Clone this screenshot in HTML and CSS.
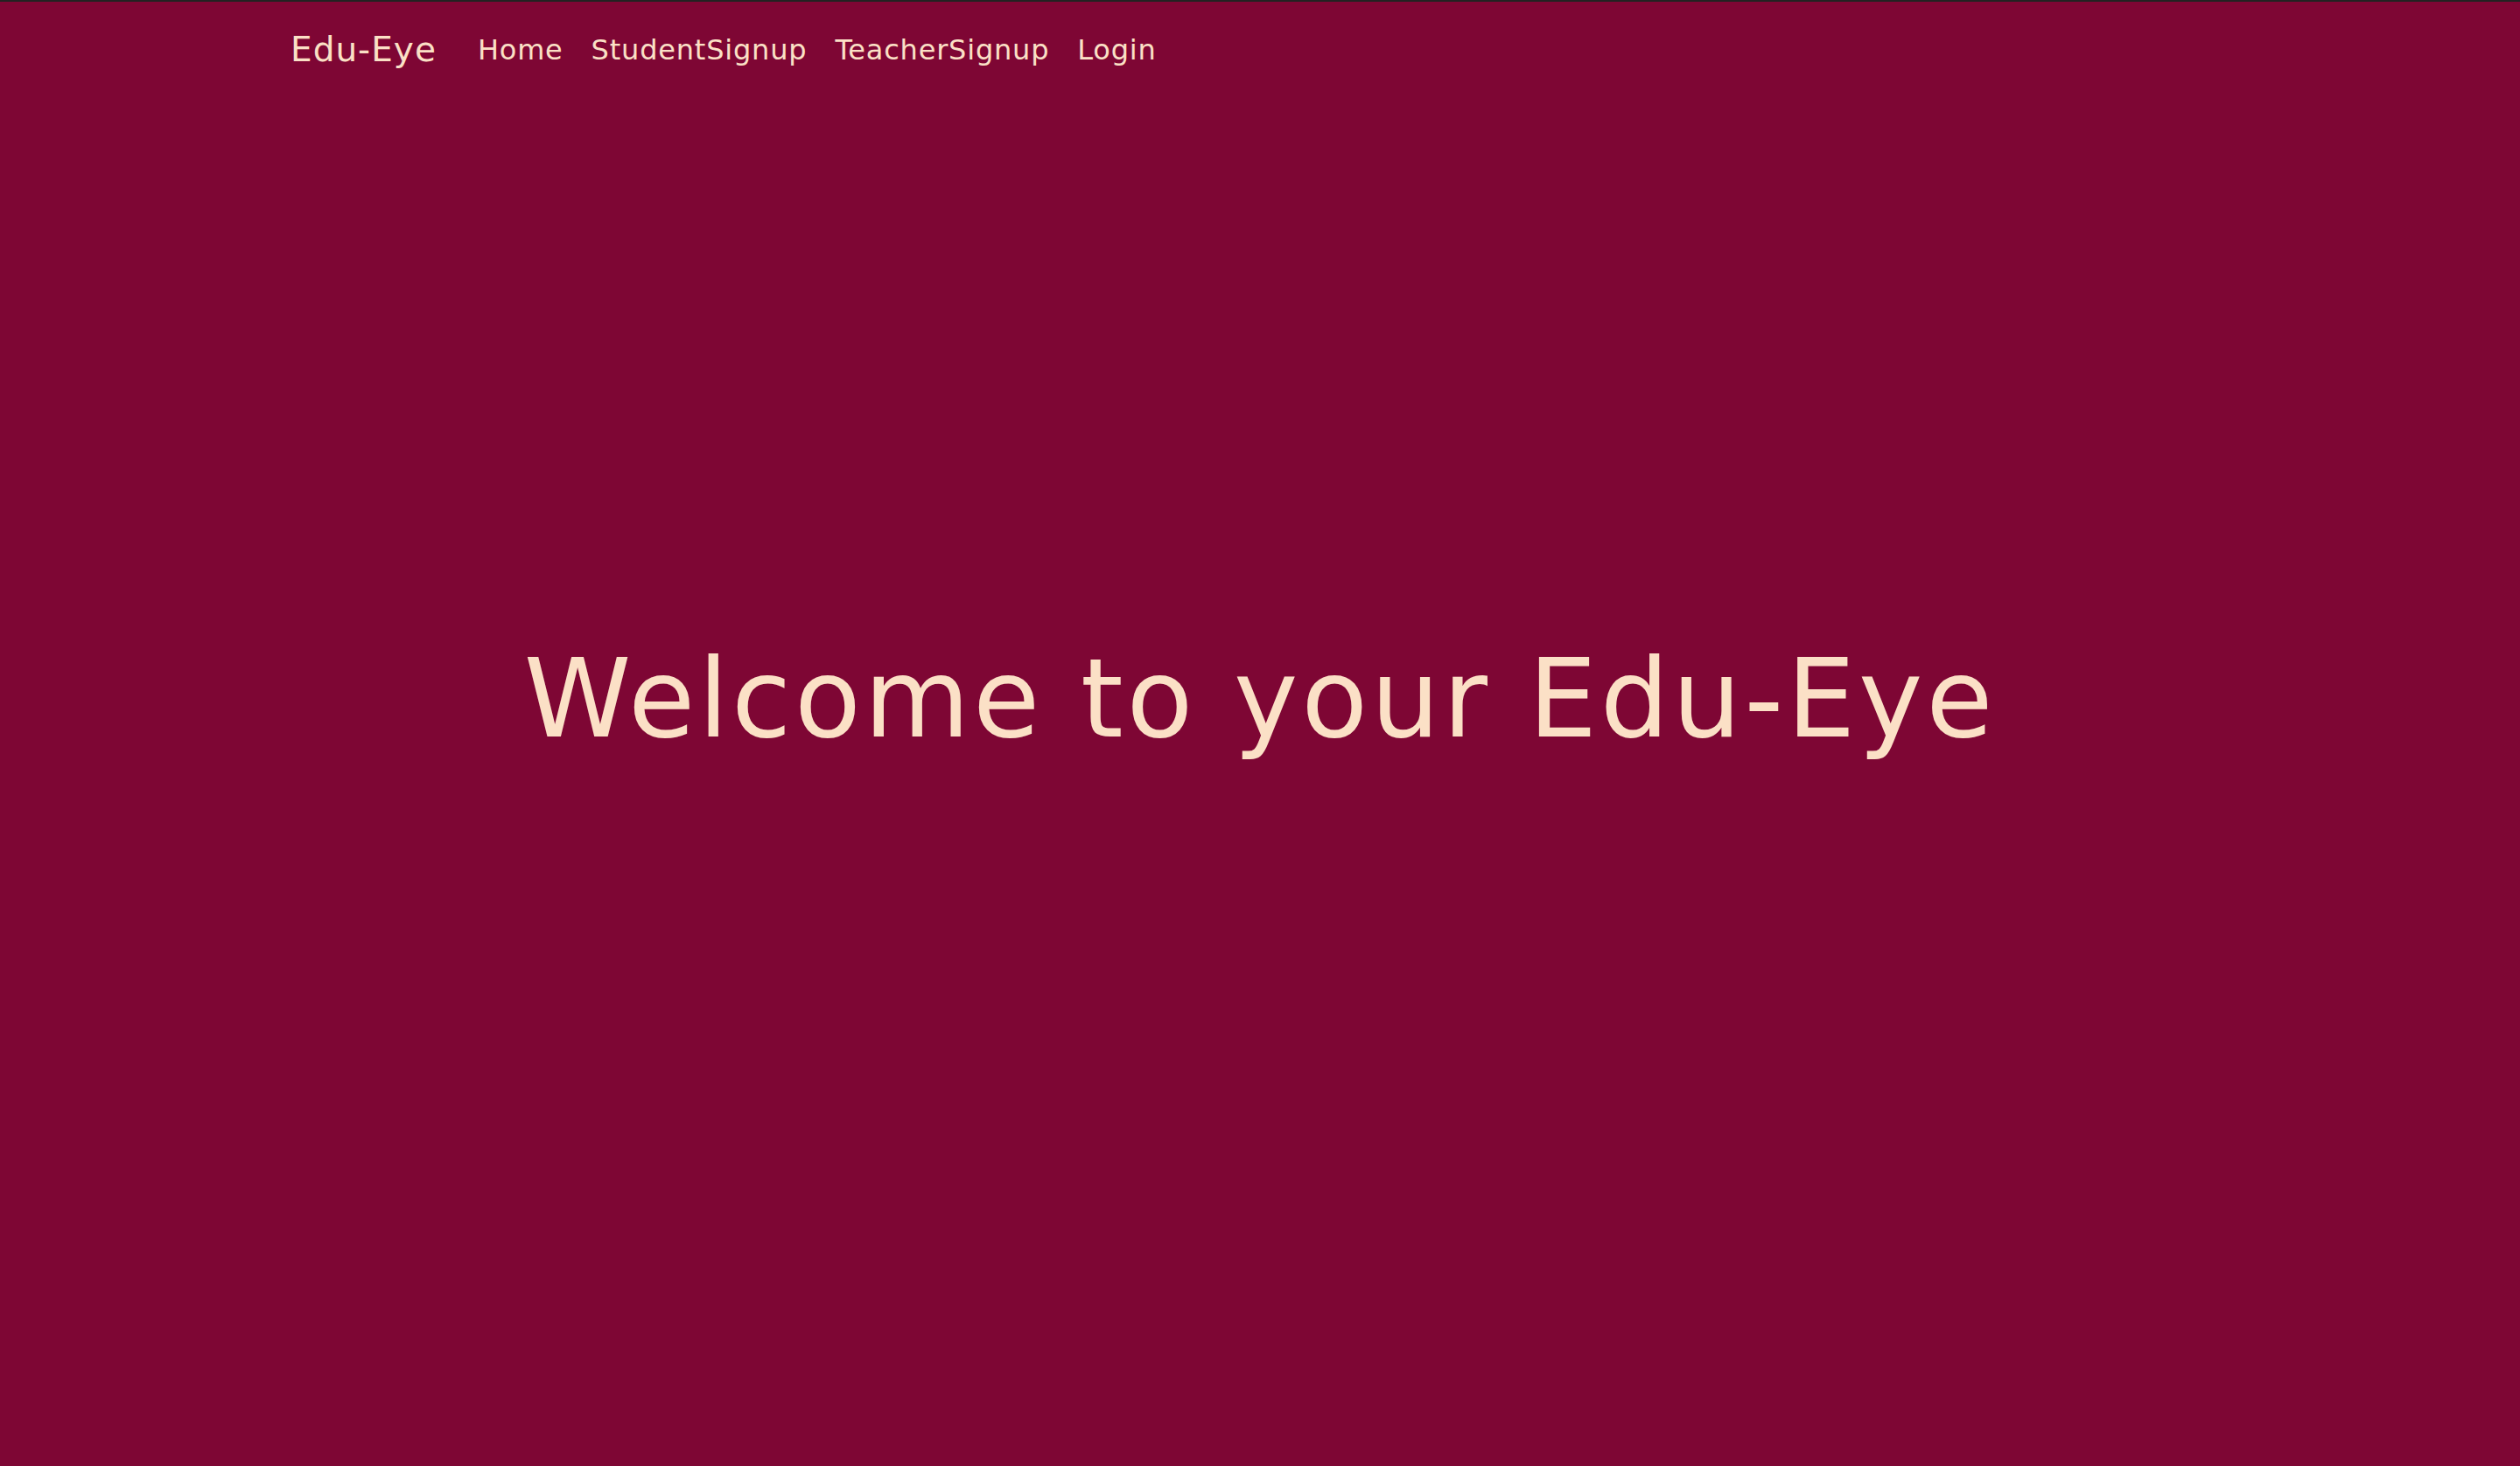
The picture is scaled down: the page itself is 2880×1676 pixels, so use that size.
FILE: index.html
```html
<!DOCTYPE html>
<html lang="en">
<head>
<meta charset="utf-8">
<title>Edu-Eye</title>
<link rel="stylesheet" href="styles.css">
</head>
<body>
<nav class="navbar">
  <div class="container nav-inner">
    <a class="brand" href="#">Edu-Eye</a>
    <ul class="nav-links">
      <li><a class="nav-link" href="#">Home</a></li>
      <li><a class="nav-link" href="#">StudentSignup</a></li>
      <li><a class="nav-link" href="#">TeacherSignup</a></li>
      <li><a class="nav-link" href="#">Login</a></li>
    </ul>
  </div>
</nav>
<main class="hero">
  <h1 class="hero-title">Welcome to your Edu-Eye</h1>
</main>
</body>
</html>
```
FILE: styles.css
```css
html, body {
  margin: 0;
  padding: 0;
}
body {
  background: #7e0634;
  border-top: 2px solid #222222;
  min-height: 1674px;
  font-family: "DejaVu Sans", "Liberation Sans", sans-serif;
  color: #fbe0c6;
}
.navbar {
  padding: 15px 0;
}
.container {
  width: 2280px;
  margin: 0 auto;
  padding: 0 32px;
  box-sizing: border-box;
}
.nav-inner {
  display: flex;
  align-items: center;
}
.brand {
  font-size: 39px;
  line-height: 1.5;
  padding: 10px 0;
  margin-right: 31px;
  letter-spacing: 1px;
  color: #fbe0c6;
  text-decoration: none;
}
.nav-links {
  display: flex;
  list-style: none;
  margin: 0;
  padding: 0;
}
.nav-link {
  display: block;
  font-size: 32px;
  line-height: 48px;
  padding: 16px 16px;
  letter-spacing: 0.8px;
  color: #fbe0c6;
  text-decoration: none;
}
.hero {
  padding-top: 613px;
  text-align: center;
}
.hero-title {
  margin: 0;
  font-weight: normal;
  font-size: 124px;
  line-height: 1.2;
  letter-spacing: 3.7px;
  color: #fbe0c6;
}
```
